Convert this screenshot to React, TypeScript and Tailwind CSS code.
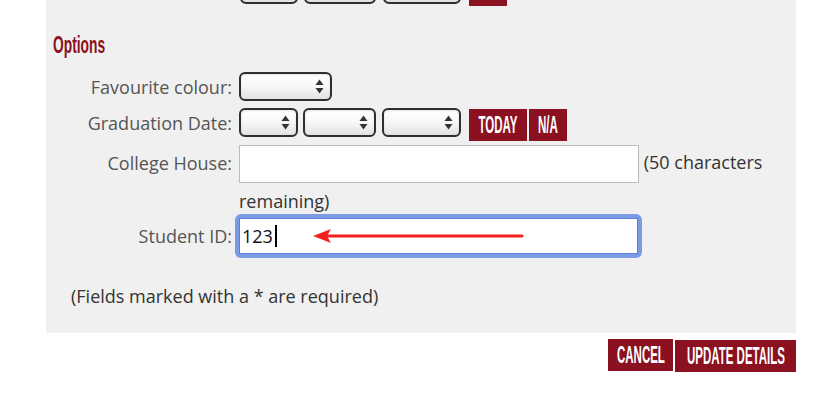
import React from 'react';

const label = "w-[186px] shrink-0 text-right text-[18px] leading-[25px] text-[#555]";

function Arrows() {
  return (
    <svg width="9" height="15" viewBox="0 0 9 15" className="shrink-0">
      <polygon points="0.5,6 4.5,0.5 8.5,6" fill="#333" />
      <polygon points="0.5,9 8.5,9 4.5,14.5" fill="#333" />
    </svg>
  );
}

function SelectBox({ w, extra = '' }: { w: string; extra?: string }) {
  return (
    <div
      className={`${w} ${extra} h-[29px] shrink-0 rounded-[6px] border-2 border-[#2f2f2f] bg-gradient-to-b from-white via-[#f7f7f7] to-[#e2e2e2] shadow-[inset_0_1px_2px_rgba(0,0,0,0.12)] flex items-center justify-end pr-[6px]`}
    >
      <Arrows />
    </div>
  );
}

function RedButton({ text, w }: { text: string; w: string }) {
  return (
    <div className={`${w} h-[32px] shrink-0 bg-[#8b1020] flex items-center justify-center overflow-hidden`}>
      <span className="inline-block scale-x-[0.5] whitespace-nowrap font-['Liberation_Sans',sans-serif] font-bold text-[23px] leading-none text-white">
        {text}
      </span>
    </div>
  );
}

export default function App() {
  return (
    <div className="w-[836px] h-[408px] bg-white overflow-hidden font-['Open_Sans',sans-serif]">
      {/* Form panel */}
      <div className="ml-[46px] w-[750px] h-[333px] bg-[#f0f0f0] overflow-hidden">
        {/* previous row, scrolled off the top */}
        <div className="flex items-start -mt-[25px]">
          <div className="w-[194px] shrink-0" />
          <div className="flex gap-[6px]">
            <SelectBox w="w-[58px]" />
            <SelectBox w="w-[72px]" />
            <SelectBox w="w-[78px]" extra="ml-[1px]" />
          </div>
          <div className="ml-[8px] -mt-[1px]">
            <RedButton text="N/A" w="w-[38px]" />
          </div>
        </div>

        {/* Options heading */}
        <div className="mt-[27px] pl-[7px] h-[24px]">
          <span className="inline-block origin-left scale-x-[0.6] font-['Liberation_Sans',sans-serif] font-bold text-[23px] leading-[24px] text-[#8b1020]">
            Options
          </span>
        </div>

        {/* Favourite colour */}
        <div className="mt-[15px] flex items-start gap-[7px]">
          <div className={`${label} pt-[3px]`}>Favourite colour:</div>
          <SelectBox w="w-[93px]" />
        </div>

        {/* Graduation Date */}
        <div className="mt-[7px] flex items-start gap-[7px]">
          <div className={`${label} pt-[3px]`}>Graduation Date:</div>
          <div className="flex items-start">
            <SelectBox w="w-[59px]" />
            <SelectBox w="w-[73px]" extra="ml-[5px]" />
            <SelectBox w="w-[79px]" extra="ml-[6px]" />
          </div>
          <div className="ml-[1px] mt-[1px] flex gap-[2px]">
            <RedButton text="TODAY" w="w-[58px]" />
            <RedButton text="N/A" w="w-[38px]" />
          </div>
        </div>

        {/* College House */}
        <div className="mt-[3px] flex items-start gap-[7px]">
          <div className={`${label} pt-[7px]`}>College House:</div>
          <div className="w-[540px] text-[18px] leading-[36px] text-[#333]">
            <span className="inline-block align-[-14px] w-[400px] h-[38px] bg-white border border-[#bdbdbd]" />{' '}
            (50 characters remaining)
          </div>
        </div>

        {/* Student ID */}
        <div className="-mt-[5px] flex items-start gap-[3px]">
          <div className={`${label} pt-[10px]`}>Student ID:</div>
          <div className="relative w-[407px] h-[44px] rounded-[6px] bg-[#7b9be6] p-[4px]">
            <div className="h-full bg-white border border-[#5b7fd8] flex items-center pl-[2px]">
              <span className="text-[18px] leading-[25px] text-[#111]">123</span>
              <span className="ml-[2px] w-[2px] h-[22px] bg-black" />
            </div>
            <svg className="absolute left-[78px] top-[14px]" width="212" height="16" viewBox="0 0 212 16">
              <line x1="14" y1="8" x2="209" y2="8" stroke="#f41f1f" strokeWidth="3" strokeLinecap="round" />
              <polygon points="0,8 18,1 14,8 18,15" fill="#f41f1f" />
            </svg>
          </div>
        </div>

        {/* Note */}
        <div className="mt-[26px] pl-[25px] text-[18px] leading-[25px] text-[#333]">
          (Fields marked with a * are required)
        </div>
      </div>

      {/* Actions */}
      <div className="w-[796px] flex justify-end items-start gap-[2px] mt-[6px]">
        <RedButton text="CANCEL" w="w-[65px]" />
        <div className="mt-[1px]">
          <RedButton text="UPDATE DETAILS" w="w-[121px]" />
        </div>
      </div>
    </div>
  );
}
